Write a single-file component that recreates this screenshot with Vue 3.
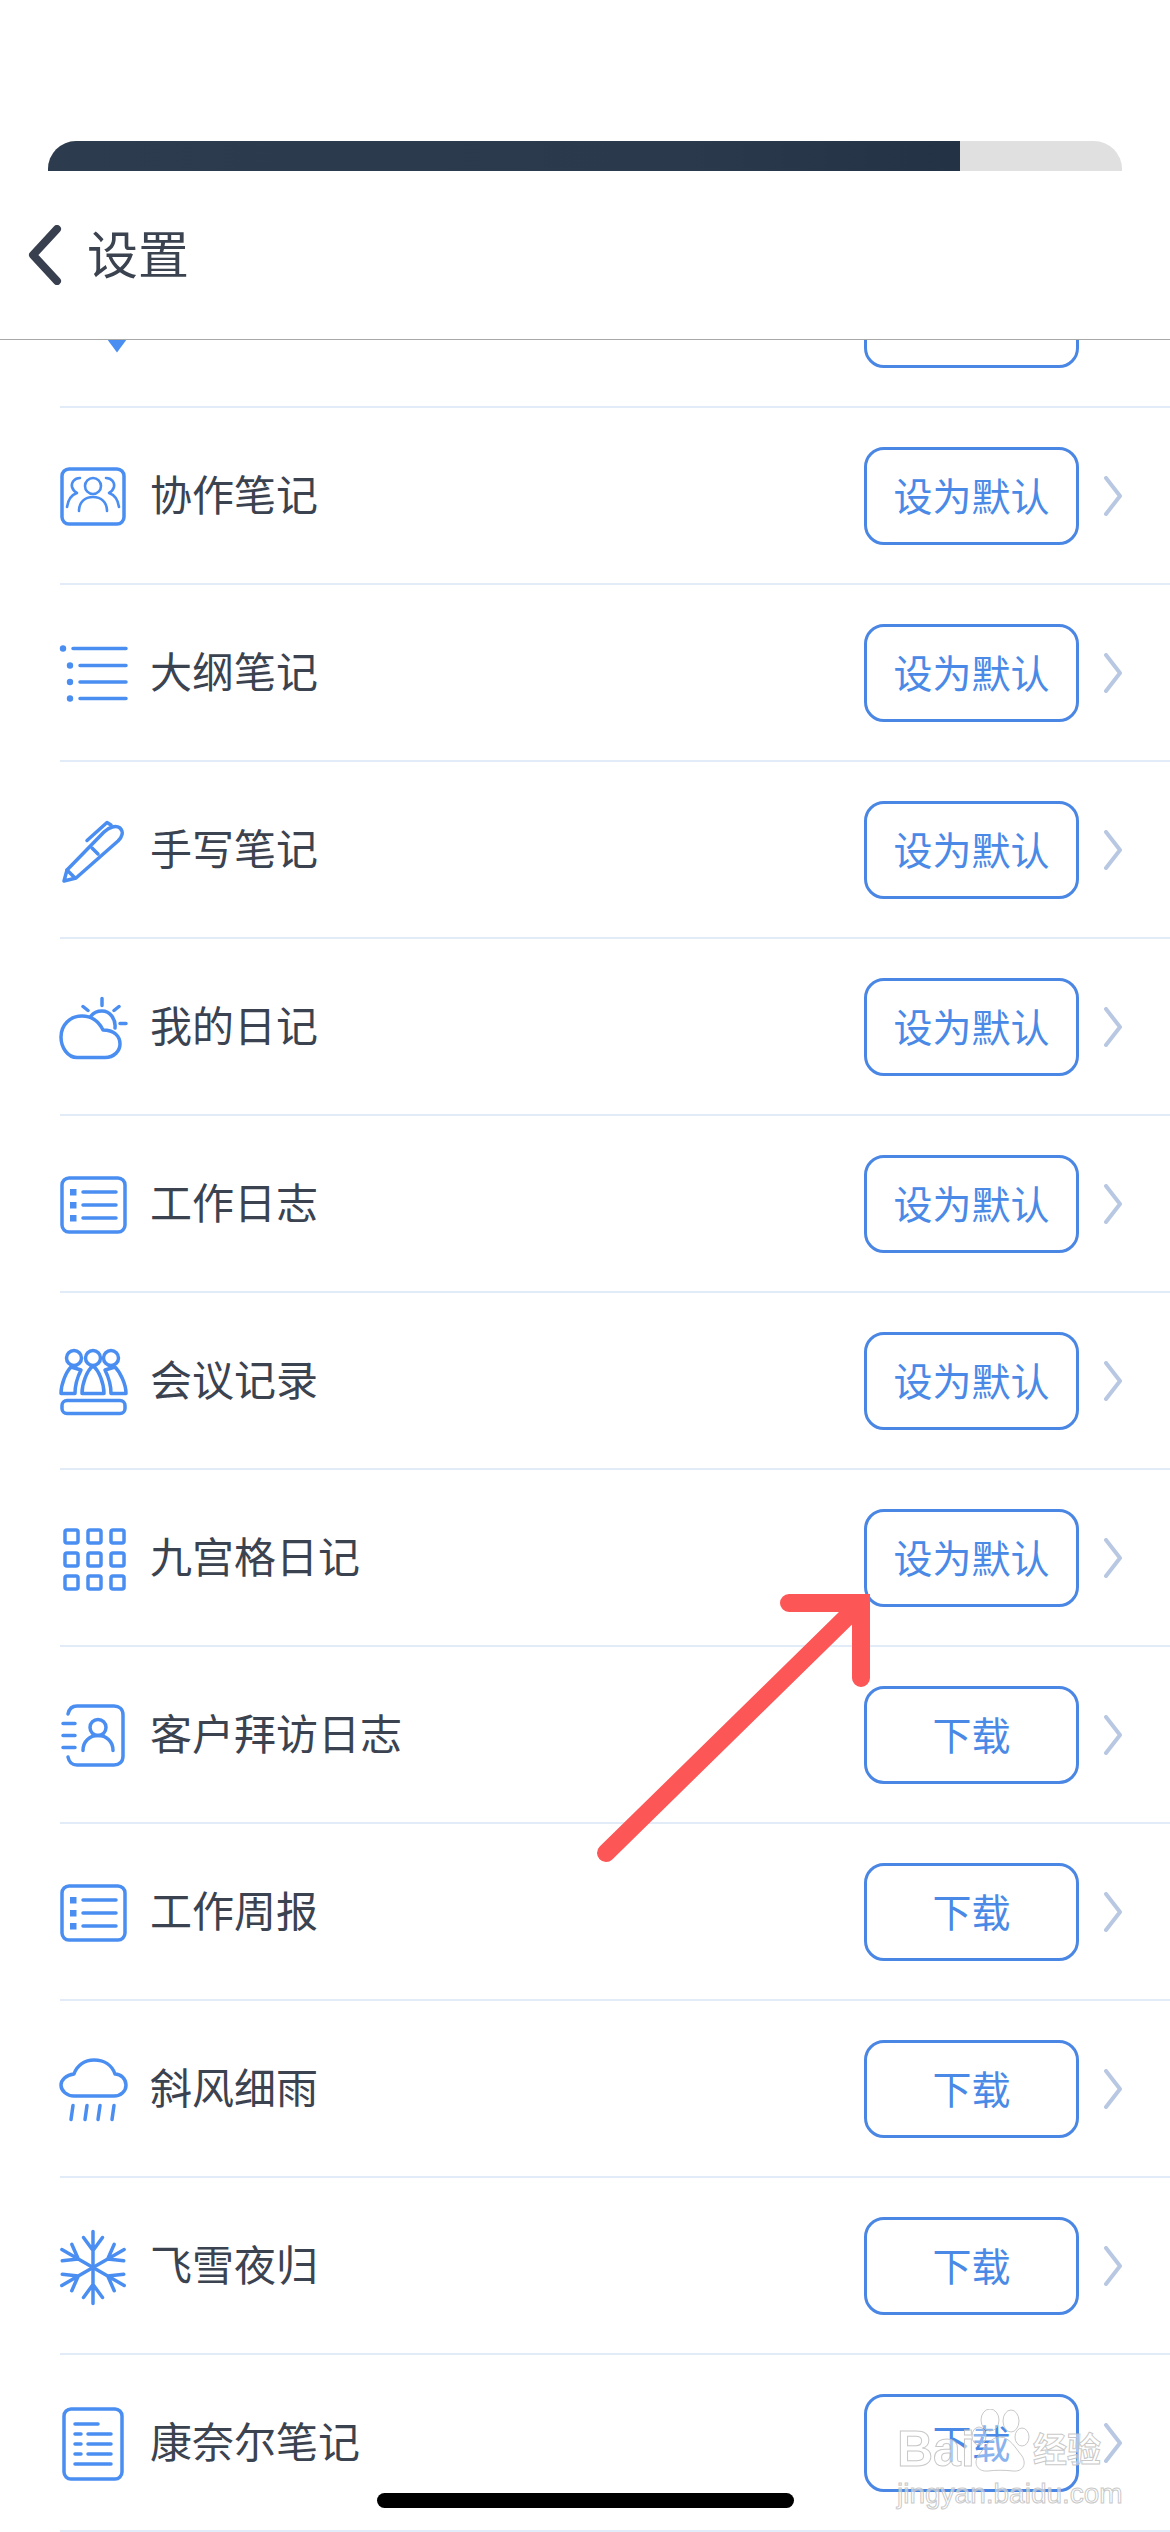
<template>
  <div class="page">
    <div class="top-bar">
      <div class="top-bar-fill"></div>
    </div>

    <header class="nav">
      <svg class="back" width="36" height="60" viewBox="0 0 36 60">
        <path d="M30 4 L6 30 L30 56" />
      </svg>
      <span class="nav-title">设置</span>
    </header>

    <div class="list-wrap">
      <div class="list">
        <div v-for="row in rows" :key="row.id" class="row">
          <svg class="icon" width="70" height="70" viewBox="0 0 70 70">
            <!-- 上一行被遮住的图标 -->
            <template v-if="row.icon === 'clipped'">
              <polygon class="solid" points="49,55 69,55 59,68.5" />
            </template>

            <template v-else-if="row.icon === 'team'">
              <rect x="4" y="8" width="62" height="55" rx="7" />
              <g class="thin">
                <circle cx="35" cy="25" r="8" />
                <path d="M21 50 C21 41 27 36 35 36 C43 36 49 41 49 50" />
                <path d="M22 17 C16 17 13 22 14 26 C15 29 17 31 19 32 C13 34 10 39 9 46" />
                <path d="M48 17 C54 17 57 22 56 26 C55 29 53 31 51 32 C57 34 60 39 61 46" />
              </g>
            </template>

            <template v-else-if="row.icon === 'outline'">
              <circle class="solid" cx="5" cy="10.5" r="3.2" />
              <circle class="solid" cx="12" cy="27.5" r="3.2" />
              <circle class="solid" cx="12" cy="44" r="3.2" />
              <circle class="solid" cx="12" cy="60.5" r="3.2" />
              <path d="M15 10.5 H68 M22 27.5 H68 M22 44 H68 M22 60.5 H68" />
            </template>

            <template v-else-if="row.icon === 'pen'">
              <path d="M6 66 L9 55 L46 17 C51 12 58 10 62 13 C66 17 64 22 60 26 L18 63 Z" />
              <path d="M9 55 L17 63 M34 33 L40 39" />
              <path d="M29 25.5 L49 7.5 L53 10" />
            </template>

            <template v-else-if="row.icon === 'weather'">
              <path d="M19 65.5 H47 C56 65.5 62 59 62 52 C62 44 56 38 45 38 C41 30 35 24 24 24 C12 24 3 33 3 45 C3 56 10 65.5 19 65.5 Z" />
              <path d="M33 24 C36 20 40 19 44 19 C52 19 58 27 57 36" />
              <path d="M44 6.5 V13.5 M25 14.5 L30 18.5 M61 14.5 L56 18.5 M62 31.5 H68" />
            </template>

            <template v-else-if="row.icon === 'log'">
              <rect x="4" y="9" width="63" height="54" rx="7" />
              <rect class="solid no-stroke" x="12" y="20" width="6.5" height="6.5" />
              <rect class="solid no-stroke" x="12" y="33" width="6.5" height="6.5" />
              <rect class="solid no-stroke" x="12" y="46" width="6.5" height="6.5" />
              <path d="M25 23 H58 M25 36 H58 M25 49 H58" />
            </template>

            <template v-else-if="row.icon === 'meeting'">
              <circle cx="16" cy="12" r="7.5" />
              <circle cx="35" cy="12" r="7.5" />
              <circle cx="53" cy="12" r="7.5" />
              <path d="M35 20 C29 24 24 38 24 47.5 H46 C46 38 41 24 35 20 Z" />
              <path d="M13 21 C8 26 3 38 3 47.5 H17 C17 40 20 30 23 24 Z" />
              <path d="M57 21 C62 26 68 38 68 47.5 H53 C53 40 50 30 47 24 Z" />
              <rect x="4" y="54.5" width="63" height="13" rx="5" />
            </template>

            <template v-else-if="row.icon === 'grid'">
              <template v-for="y in [7, 30, 53]" :key="y">
                <rect v-for="x in [7, 30, 53]" :key="x" :x="x" :y="y" width="13" height="13" rx="2" />
              </template>
            </template>

            <template v-else-if="row.icon === 'visit'">
              <path d="M10 14 C11 9 14 6 19 6 H56 C61 6 65 9 65 15 V56 C65 62 61 65 56 65 H19 C14 65 11 62 10 57" />
              <path d="M5 23.5 H17 M5 35.5 H17 M5 47.5 H17" />
              <circle cx="40" cy="27.5" r="8" />
              <path d="M25 50.5 C25 41 32 35.5 40 35.5 C48 35.5 55 41 55 50.5" />
            </template>

            <template v-else-if="row.icon === 'rain'">
              <path d="M16 42 H56 C63 42 68 37 68 31 C68 25 63 20 57 20 C54 11 46 6 36 6 C27 6 19 11 16 20 C8 21 3 26 3 31 C3 37 9 42 16 42 Z" />
              <path d="M15 51.5 L13 65.5 M29 51.5 L27 65.5 M42 51.5 L40 65.5 M56 51.5 L54 65.5" />
            </template>

            <template v-else-if="row.icon === 'snow'">
              <g v-for="deg in [0, 60, 120, 180, 240, 300]" :key="deg" :transform="`translate(35 36.5) rotate(${deg})`">
                <path d="M0 0 V-36 M-9.5 -30 L0 -17 L9.5 -30" />
              </g>
            </template>

            <template v-else-if="row.icon === 'cornell'">
              <rect x="6" y="1" width="58" height="70" rx="7" />
              <path d="M17 16 H40 M17 26 H23 M30 26 H53 M17 36 H23 M30 36 H53 M17 46 H23 M30 46 H53 M17 56 H53" />
            </template>
          </svg>

          <span class="row-name">{{ row.name }}</span>
          <button class="row-btn">{{ row.action }}</button>
          <svg class="chevron" width="18" height="40" viewBox="0 0 18 40">
            <path d="M2 2 L16 20 L2 38" />
          </svg>
        </div>
      </div>
    </div>

    <!-- 红色标注箭头 -->
    <svg class="arrow" width="300" height="290" viewBox="0 0 300 290">
      <path d="M16 273 L268 26" />
      <path d="M199 23 H271 V98" />
    </svg>

    <div class="home-bar"></div>

    <!-- 百度经验水印 -->
    <div class="watermark">
      <div class="wm-top">
        <span class="wm-bai">Bai</span>
        <svg class="wm-paw" width="60" height="64" viewBox="0 0 60 64">
          <ellipse cx="20" cy="11" rx="9" ry="11" />
          <ellipse cx="41" cy="12" rx="8" ry="11" />
          <ellipse cx="9" cy="27" rx="7" ry="9" />
          <ellipse cx="52" cy="28" rx="7" ry="9" />
          <path d="M30 28 C20 28 14 40 8 47 C3 55 8 63 18 62 C25 61 35 61 43 62 C53 63 57 55 52 47 C46 40 40 28 30 28 Z" />
        </svg>
        <span class="wm-cn">经验</span>
      </div>
      <div class="wm-url">jingyan.baidu.com</div>
    </div>
  </div>
</template>

<script setup>
const DEFAULT = '设为默认'
const DOWNLOAD = '下载'

const rows = [
  { id: 0, icon: 'clipped', name: '', action: DEFAULT },
  { id: 1, icon: 'team', name: '协作笔记', action: DEFAULT },
  { id: 2, icon: 'outline', name: '大纲笔记', action: DEFAULT },
  { id: 3, icon: 'pen', name: '手写笔记', action: DEFAULT },
  { id: 4, icon: 'weather', name: '我的日记', action: DEFAULT },
  { id: 5, icon: 'log', name: '工作日志', action: DEFAULT },
  { id: 6, icon: 'meeting', name: '会议记录', action: DEFAULT },
  { id: 7, icon: 'grid', name: '九宫格日记', action: DEFAULT },
  { id: 8, icon: 'visit', name: '客户拜访日志', action: DOWNLOAD },
  { id: 9, icon: 'log', name: '工作周报', action: DOWNLOAD },
  { id: 10, icon: 'rain', name: '斜风细雨', action: DOWNLOAD },
  { id: 11, icon: 'snow', name: '飞雪夜归', action: DOWNLOAD },
  { id: 12, icon: 'cornell', name: '康奈尔笔记', action: DOWNLOAD }
]
</script>

<style scoped>
.page {
  position: relative;
  width: 1170px;
  height: 2532px;
  overflow: hidden;
  background: #fff;
  display: flex;
  flex-direction: column;
  padding-top: 141px;
  box-sizing: border-box;
  font-family: "Liberation Sans", "Noto Sans CJK SC", sans-serif;
}

.top-bar {
  flex-shrink: 0;
  width: 1074px;
  height: 30px;
  margin-left: 48px;
  background: #e0e0e0;
  border-radius: 28px 28px 0 0;
  overflow: hidden;
}

.top-bar-fill {
  width: 912px;
  height: 100%;
  background: linear-gradient(90deg, #2d3b4e, #2b394c 70%, #243245);
}

/* 导航栏 */
.nav {
  flex-shrink: 0;
  position: relative;
  z-index: 2;
  height: 168px;
  display: flex;
  align-items: center;
  gap: 24px;
  padding: 0 0 0 27px;
  background: #fff;
  border-bottom: 1px solid #a8a8a8;
}

.back path {
  fill: none;
  stroke: #383f4e;
  stroke-width: 8;
  stroke-linecap: round;
  stroke-linejoin: round;
}

.nav-title {
  padding-top: 2px;
  font-size: 51px;
  line-height: 1;
  color: #3c4350;
}

/* 列表 */
.list-wrap {
  flex: 1;
  min-height: 0;
  overflow: hidden;
}

.list {
  margin-top: -109px;
}

.row {
  height: 177px;
  box-sizing: border-box;
  margin-left: 60px;
  padding-right: 48px;
  display: flex;
  align-items: center;
  border-bottom: 2px solid #e2ebf8;
}

.icon {
  flex-shrink: 0;
  margin-left: -2px;
  overflow: visible;
  fill: none;
  stroke: #4b8ef2;
  stroke-width: 3.5;
  stroke-linecap: round;
  stroke-linejoin: round;
}

.icon .solid {
  fill: #4b8ef2;
  stroke: none;
}

.icon .no-stroke {
  stroke: none;
}

.icon .thin {
  stroke-width: 2.6;
}

.row-name {
  flex: 1;
  margin-left: 22px;
  padding-top: 3px;
  font-size: 42px;
  line-height: 1;
  color: #3c4350;
}

.row-btn {
  flex-shrink: 0;
  width: 215px;
  height: 98px;
  padding: 3px 0 0;
  box-sizing: border-box;
  background: #fff;
  border: 3px solid #4a86e4;
  border-radius: 20px;
  color: #4a8ae6;
  font-family: inherit;
  font-size: 39px;
  line-height: 1;
}

.chevron {
  flex-shrink: 0;
  margin-left: 25px;
  fill: none;
  stroke: #b9c8e2;
  stroke-width: 4;
  stroke-linecap: round;
  stroke-linejoin: round;
}

/* 覆盖层 */
.arrow {
  position: absolute;
  left: 590px;
  top: 1580px;
  fill: none;
  stroke: #fc5656;
  stroke-width: 18;
  stroke-linecap: round;
  stroke-linejoin: miter;
}

.home-bar {
  position: absolute;
  left: 377px;
  top: 2493px;
  width: 417px;
  height: 15px;
  border-radius: 8px;
  background: #000;
}

.watermark {
  position: absolute;
  left: 897px;
  top: 2407px;
  width: 210px;
  color: rgba(255, 255, 255, 0.55);
  -webkit-text-stroke: 1px rgba(190, 190, 190, 0.85);
}

.wm-top {
  display: flex;
  align-items: flex-end;
  height: 66px;
}

.wm-bai {
  width: 73px;
  font-size: 50px;
  line-height: 48px;
  font-weight: 700;
}

.wm-paw {
  flex-shrink: 0;
  fill: rgba(255, 255, 255, 0.35);
  stroke: rgba(190, 190, 190, 0.85);
  stroke-width: 1;
}

.wm-cn {
  margin-left: 3px;
  font-size: 34px;
  line-height: 46px;
  font-weight: 700;
}

.wm-url {
  margin-top: 6px;
  font-size: 28px;
  line-height: 30px;
  white-space: nowrap;
}
</style>
